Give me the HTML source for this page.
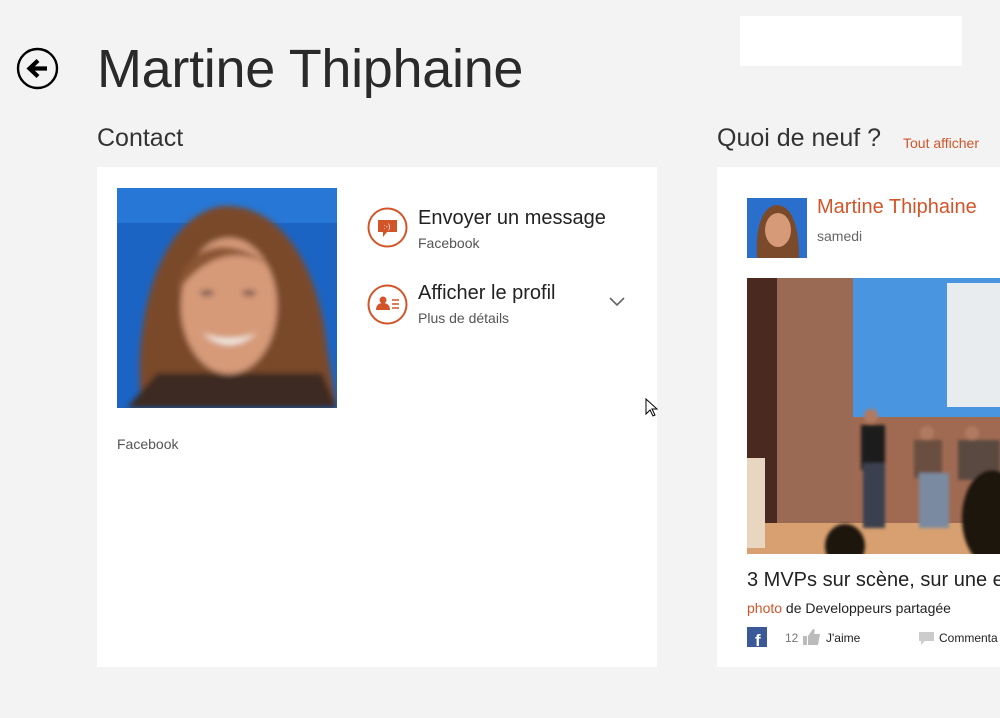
<!DOCTYPE html>
<html><head><meta charset="utf-8"><style>
*{margin:0;padding:0;box-sizing:border-box}
body{width:1000px;height:718px;background:#f3f3f3;font-family:"Liberation Sans",sans-serif;position:relative;overflow:hidden;color:#222}
.a{position:absolute}
.or{color:#d2552a}
</style></head><body>
<div class="a" style="left:740px;top:16px;width:222px;height:50px;background:#fff"></div>
<svg class="a" style="left:16px;top:47px" width="43" height="43" viewBox="0 0 43 43"><circle cx="21.5" cy="21.5" r="19.5" fill="none" stroke="#000" stroke-width="2.4"/><path d="M31 21.5H15M22 13.5L13.5 21.5L22 29.5" fill="none" stroke="#000" stroke-width="4.2"/></svg>
<div class="a" style="left:97px;top:38px;font-size:54px;color:#2a2a2a;letter-spacing:-0.3px">Martine Thiphaine</div>
<div class="a" style="left:97px;top:124px;font-size:25px;color:#333">Contact</div>
<div class="a" style="left:717px;top:124px;font-size:25px;color:#333">Quoi de neuf ?</div>
<div class="a or" style="left:903px;top:135px;font-size:14px">Tout afficher</div>

<div class="a" style="left:97px;top:167px;width:560px;height:500px;background:#fff"></div>
<svg class="a" style="left:117px;top:188px" width="220" height="220" viewBox="0 0 220 220">
<defs><filter id="b"><feGaussianBlur stdDeviation="3"/></filter></defs>
<rect width="220" height="220" fill="#1c64c4"/>
<rect y="0" width="220" height="35" fill="#2677d6"/>
<g filter="url(#b)">
<path d="M25 220 C15 150 35 30 105 18 C175 15 205 100 210 160 L220 220Z" fill="#7a4a2a"/>
<path d="M10 220 L40 185 L205 185 L220 220Z" fill="#3e2a20"/>
<ellipse cx="112" cy="118" rx="48" ry="68" fill="#d69a78"/>
<path d="M60 105 C65 55 120 40 165 90 C140 60 95 55 60 105Z" fill="#8a5530"/>
<ellipse cx="90" cy="105" rx="7" ry="3" fill="#7a5a50"/><ellipse cx="132" cy="105" rx="7" ry="3" fill="#7a5a50"/>
<path d="M85 145 Q112 168 140 145 Q112 156 85 145Z" fill="#f4eee8"/>
</g>
</svg>
<div class="a" style="left:117px;top:436px;font-size:14px;color:#555">Facebook</div>

<svg class="a" style="left:367px;top:207px" width="41" height="41"><circle cx="20.5" cy="20.5" r="19" fill="none" stroke="#d2552a" stroke-width="2"/><path d="M11 13h19v12h-10l-4 5v-5h-5z" fill="#d2552a"/><text x="20" y="22" font-size="7" fill="#fff" text-anchor="middle" font-family="Liberation Sans">:-)</text></svg>
<div class="a" style="left:418px;top:207px;font-size:20px;color:#222">Envoyer un message</div>
<div class="a" style="left:418px;top:235px;font-size:14px;color:#555">Facebook</div>
<svg class="a" style="left:367px;top:284px" width="41" height="41"><circle cx="20.5" cy="20.5" r="19" fill="none" stroke="#d2552a" stroke-width="2"/><circle cx="16" cy="16" r="3.5" fill="#d2552a"/><path d="M9 26c0-5 3-7 7-7s7 2 7 7z" fill="#d2552a"/><path d="M25 16h7M25 20h7M25 24h7" stroke="#d2552a" stroke-width="1.6"/></svg>
<div class="a" style="left:418px;top:282px;font-size:20px;color:#222">Afficher le profil</div>
<div class="a" style="left:418px;top:310px;font-size:14px;color:#555">Plus de détails</div>
<svg class="a" style="left:608px;top:295px" width="18" height="12"><path d="M2 3l7 7 7-7" fill="none" stroke="#666" stroke-width="1.6"/></svg>
<svg class="a" style="left:645px;top:398px" width="13" height="20"><path d="M1 1v15l4-4 3 6 2-1-3-6h5z" fill="#fff" stroke="#000"/></svg>

<div class="a" style="left:717px;top:167px;width:283px;height:500px;background:#fff"></div>
<svg class="a" style="left:747px;top:198px" width="60" height="60" viewBox="0 0 60 60"><rect width="60" height="60" fill="#2a6fcc"/><path d="M10 60C8 30 15 8 30 7C46 8 52 30 52 60Z" fill="#7a4a2a"/><ellipse cx="31" cy="32" rx="13" ry="17" fill="#d69a78"/></svg>
<div class="a or" style="left:817px;top:196px;font-size:20px">Martine Thiphaine</div>
<div class="a" style="left:817px;top:228px;font-size:14px;color:#666">samedi</div>
<svg class="a" style="left:747px;top:278px" width="253" height="276" viewBox="0 0 253 276">
<defs><filter id="c"><feGaussianBlur stdDeviation="1.5"/></filter></defs>
<rect width="253" height="276" fill="#8a5a44"/>
<rect width="30" height="276" fill="#4a2a20"/>
<rect x="30" width="80" height="250" fill="#9a6a54"/>
<rect x="106" width="147" height="139" fill="#4a95df"/>
<rect x="200" y="5" width="53" height="124" fill="#e8ecef"/>
<rect x="106" y="139" width="147" height="115" fill="#a06a52"/>
<rect x="0" y="245" width="253" height="31" fill="#d8a070"/>
<rect x="0" y="180" width="18" height="90" fill="#e8d6c0"/>
<g filter="url(#c)">
<rect x="114" y="147" width="24" height="45" fill="#1a1a1a"/><rect x="116" y="185" width="22" height="65" fill="#3a4050"/><circle cx="124" cy="138" r="7" fill="#b07a60"/>
<rect x="167" y="162" width="28" height="38" fill="#6a5040"/><rect x="172" y="195" width="30" height="55" fill="#7a8aa0"/><circle cx="180" cy="155" r="7" fill="#b07a60"/>
<rect x="211" y="162" width="30" height="40" fill="#5a4a40"/><circle cx="225" cy="155" r="7" fill="#b07a60"/>
<rect x="238" y="162" width="15" height="40" fill="#5a4a40"/>
<ellipse cx="98" cy="268" rx="20" ry="22" fill="#1a1210"/>
<ellipse cx="245" cy="240" rx="30" ry="48" fill="#1a1210"/>
</g>
</svg>
<div class="a" style="left:747px;top:569px;font-size:20px;color:#222;white-space:nowrap">3 MVPs sur scène, sur une e</div>
<div class="a" style="left:747px;top:600px;font-size:14px;color:#222;white-space:nowrap"><span class="or">photo</span> de Developpeurs partagée</div>
<svg class="a" style="left:747px;top:627px" width="20" height="20"><rect width="20" height="20" fill="#3b5998"/><text x="8" y="19" font-size="17" font-weight="bold" fill="#fff" font-family="Liberation Sans">f</text></svg>
<div class="a" style="left:785px;top:631px;font-size:12px;color:#777">12</div>
<svg class="a" style="left:802px;top:628px" width="20" height="18"><path d="M1 8h4v9H1zM6 8l5-7c2 0 2 2 1 5h6l-2 11H6z" fill="#bbb"/></svg>
<div class="a" style="left:826px;top:631px;font-size:12px;color:#222">J'aime</div>
<svg class="a" style="left:919px;top:632px" width="16" height="14"><path d="M0 0h15v9H6l-4 4V9H0z" fill="#ccc"/></svg>
<div class="a" style="left:939px;top:631px;font-size:12px;color:#222;white-space:nowrap">Commenta</div>
</body></html>
